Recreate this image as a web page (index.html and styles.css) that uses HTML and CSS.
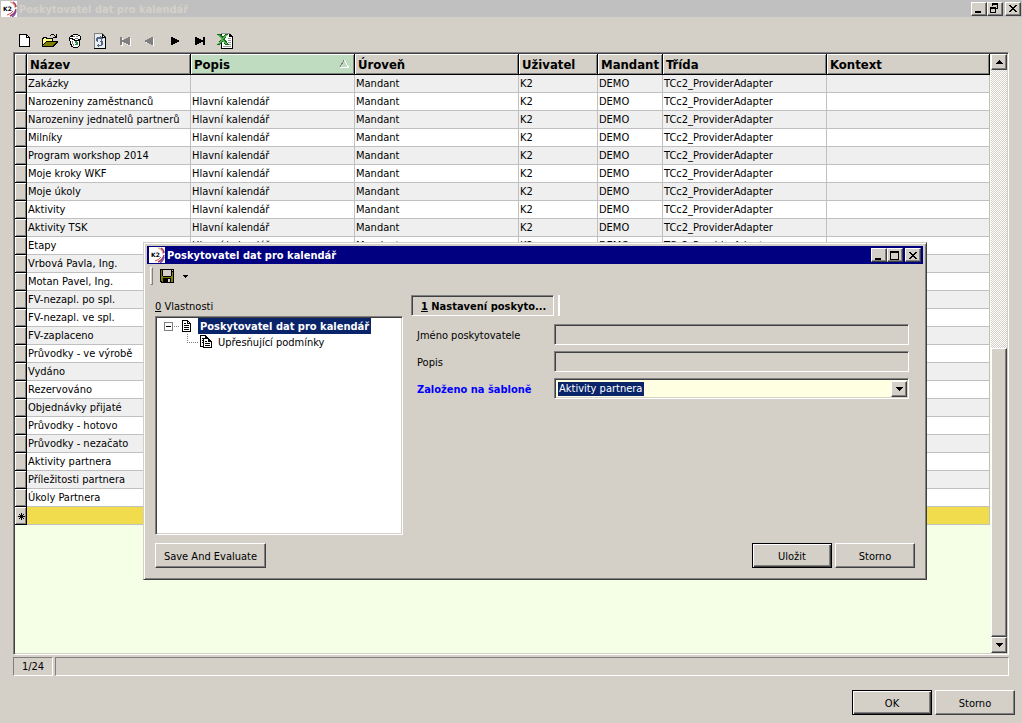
FILE: index.html
```html
<!DOCTYPE html>
<html lang="cs">
<head>
<meta charset="utf-8">
<title>Poskytovatel dat pro kalendář</title>
<link rel="stylesheet" href="styles.css">
</head>
<body>
<svg class="defs" aria-hidden="true">
  <symbol id="logo" viewBox="0 0 16 16">
    <path fill="#fff" d="M0 0h16v16H0z"/>
    <path fill="none" stroke="#e9b08a" stroke-width="1.5" d="M9 1q5 1 5 6"/>
    <path fill="none" stroke="#a03a6a" stroke-width="1.5" d="M12 1q3 2 3 5M15 8q-1 5-6 7"/>
    <path fill="none" stroke="#7a4fa8" stroke-width="1.5" d="M15 10q-1 4-4 6"/>
    <path fill="none" stroke="#d84a3a" d="M12 10q-2 3-6 4"/>
    <text class="logo-text" x="2" y="10">K2</text>
  </symbol>
  <symbol id="min" viewBox="0 0 12 11"><path d="M2 8h6v2H2z"/></symbol>
  <symbol id="max" viewBox="0 0 12 11"><path fill-rule="evenodd" d="M1 1h9v9H1zM2 3v6h7V3z"/></symbol>
  <symbol id="restore" viewBox="0 0 12 11"><path fill-rule="evenodd" d="M3 0h6v6H7V5h1V2H4v1H3zM1 4h6v6H1zM2 6v3h4V6z"/></symbol>
  <symbol id="close" viewBox="0 0 12 11"><path d="M2 2h2v1h1v1h2V3h1V2h2v1H9v1H8v1H7v1h1v1h1v1h1v1H8V8H7V7H5v1H4v1H2V8h1V7h1V6h1V5H4V4H3V3H2z"/></symbol>
  <symbol id="down" viewBox="0 0 7 4"><path d="M0 0h7v1H6v1H5v1H4v1H3V3H2V2H1V1H0z"/></symbol>
  <symbol id="up" viewBox="0 0 7 4"><path d="M0 4h7V3H6V2H5V1H4V0H3v1H2v1H1v1H0z"/></symbol>
</svg>

<div class="app">
  <header class="titlebar titlebar-inactive">
    <svg class="logo"><use href="#logo"/></svg>
    <h1 class="title">Poskytovatel dat pro kalendář</h1>
    <div class="win-controls">
      <button class="win-btn" aria-label="Minimalizovat"><svg><use href="#min"/></svg></button>
      <button class="win-btn" aria-label="Obnovit"><svg><use href="#restore"/></svg></button>
      <button class="win-btn win-close" aria-label="Zavřít"><svg><use href="#close"/></svg></button>
    </div>
  </header>

  <div class="toolbar" role="toolbar">
    <button class="tool" aria-label="Nový"><svg viewBox="0 0 16 16"><path d="M2 1h8v1h1v1h1v1h1v10H2z"/><path fill="#fff" d="M3 2h6v3h3v8H3z"/><path fill="#fff" d="M10 3h1v1h-1z"/></svg></button>
    <button class="tool" aria-label="Otevřít"><svg viewBox="0 0 16 16"><path d="M9 1h3v1h1v1h1V1h1v4h-4V4h2V3h-1V2H9v1H8V2h1zM1 4h4v1h6v3h5v1l-5 5H0V5h1z"/><path fill="#ffff80" d="M1 6h1V5h2v1h6v2H4v1H3v1H2v1H1z"/><path fill="#808000" d="M4 9h10l-4 4H1z"/></svg></button>
    <button class="tool" aria-label="Smazat"><svg viewBox="0 0 16 16"><path d="M6 1h5v1h2v1h1v4h-1v6h-1v1h-1v1H6v-1H4v-2H3V8H2V4h1V3h1V2h2z"/><path fill="#fff" d="M6 2h5v1h2v3h-2v1H8V6H6V5H3V4h3zM3 6h2v1h2v1h5v5h-1v1H6v-1H5v-2H4V8H3z"/><path fill="#808080" d="M6 3h2v1H6zM9 3h2v1H9zM8 5h3v1H8zM5 8h1v3H5zM6 11h1v2H6z"/><path fill="#2c8c3c" d="M8 8h2v1h1v3H8v-1h1v-1H8z"/></svg></button>
    <button class="tool" aria-label="Obnovit data"><svg viewBox="0 0 16 16"><path fill="#808080" d="M2 0h9l3 4v12H2z"/><path fill="#e8eeee" d="M3 1h7v4h3v10H3z"/><path d="M10 1h1v1h1v1h1v1h1v1h-4zM13 5h1v11H2v-1h11z"/><path fill="#fff" d="M11 3h1v1h-1z"/><path fill="#56658c" d="M5 4h3V3h1v1h1v1h1v1h-1v1H9V6H6v3H5V8H4V5h1zM6 12h3V9H8V8h1V7h1v1h1v4h-1v1H7v1H6v-1H5v-1h1v-1h1v1z"/></svg></button>
    <button class="tool" aria-label="První" disabled><svg viewBox="0 0 16 16"><path fill="#fff" d="M4 5h2v8H4zM7 8h1V7h2V6h2V5h2v8h-2v-1h-2v-1H8v-1H7z"/><path fill="#808080" d="M3 4h2v8H3zM5 7h2V6h2V5h2V4h2v8h-2v-1H9v-1H7V9H5z"/></svg></button>
    <button class="tool" aria-label="Předchozí" disabled><svg viewBox="0 0 16 16"><path fill="#fff" d="M4 8h2V7h2V6h2V5h2v8h-1v-1H9v-1H7v-1H4z"/><path fill="#808080" d="M3 7h2V6h2V5h2V4h2v8H9v-1H7v-1H5V9H3z"/></svg></button>
    <button class="tool" aria-label="Další"><svg viewBox="0 0 16 16"><path d="M4 4h2v1h2v1h2v1h2v2h-2v1H8v1H6v1H4z"/></svg></button>
    <button class="tool" aria-label="Poslední"><svg viewBox="0 0 16 16"><path d="M3 4h2v1h2v1h2v1h2V4h2v8h-2V9H9v1H7v1H5v1H3z"/></svg></button>
    <button class="tool" aria-label="Export do Excelu"><svg viewBox="0 0 16 16"><path d="M4 0h9v1h1v1h1v1h1v13H4z"/><path fill="#fff" d="M4 1h8v3h3v11H5V1z"/><path fill="#999" d="M4 0h9v1H4zM11 5h3v1h-3zM11 7h3v1h-3zM11 9h3v1h-3zM11 11h3v1h-3zM6 13h8v1H6z"/><path fill="#136b1c" d="M0 1h4l2 3 2-3h3L8 6l4 6H8L6 8l-3 4H0l4-6z"/><path fill="#54b04c" d="M1 2h2l7 9H8zM8 2h2L3 11H1z"/></svg></button>
  </div>

  <main class="grid sunken">
    <div class="grid-view">
      <table class="table">
        <colgroup><col class="c-mark"><col class="c-wide"><col class="c-wide"><col class="c-wide"><col class="c-user"><col class="c-mandant"><col class="c-wide"><col></colgroup>
        <thead>
          <tr><td class="mark"></td><th>Název</th><th class="sorted"><span class="sort-head">Popis <svg viewBox="0 0 9 8"><path d="M4 0 0 7" stroke="#808080"/><path d="M0 7.500h8.500L4.500 0" stroke="#fff"/></svg></span></th><th>Úroveň</th><th>Uživatel</th><th>Mandant</th><th>Třída</th><th>Kontext</th></tr>
        </thead>
        <tbody>
          <tr><td class="mark"></td><td>Zakázky</td><td></td><td>Mandant</td><td>K2</td><td>DEMO</td><td>TCc2_ProviderAdapter</td><td></td></tr>
          <tr><td class="mark"></td><td>Narozeniny zaměstnanců</td><td>Hlavní kalendář</td><td>Mandant</td><td>K2</td><td>DEMO</td><td>TCc2_ProviderAdapter</td><td></td></tr>
          <tr><td class="mark"></td><td>Narozeniny jednatelů partnerů</td><td>Hlavní kalendář</td><td>Mandant</td><td>K2</td><td>DEMO</td><td>TCc2_ProviderAdapter</td><td></td></tr>
          <tr><td class="mark"></td><td>Milníky</td><td>Hlavní kalendář</td><td>Mandant</td><td>K2</td><td>DEMO</td><td>TCc2_ProviderAdapter</td><td></td></tr>
          <tr><td class="mark"></td><td>Program workshop 2014</td><td>Hlavní kalendář</td><td>Mandant</td><td>K2</td><td>DEMO</td><td>TCc2_ProviderAdapter</td><td></td></tr>
          <tr><td class="mark"></td><td>Moje kroky WKF</td><td>Hlavní kalendář</td><td>Mandant</td><td>K2</td><td>DEMO</td><td>TCc2_ProviderAdapter</td><td></td></tr>
          <tr><td class="mark"></td><td>Moje úkoly</td><td>Hlavní kalendář</td><td>Mandant</td><td>K2</td><td>DEMO</td><td>TCc2_ProviderAdapter</td><td></td></tr>
          <tr><td class="mark"></td><td>Aktivity</td><td>Hlavní kalendář</td><td>Mandant</td><td>K2</td><td>DEMO</td><td>TCc2_ProviderAdapter</td><td></td></tr>
          <tr><td class="mark"></td><td>Aktivity TSK</td><td>Hlavní kalendář</td><td>Mandant</td><td>K2</td><td>DEMO</td><td>TCc2_ProviderAdapter</td><td></td></tr>
          <tr><td class="mark"></td><td>Etapy</td><td>Hlavní kalendář</td><td>Mandant</td><td>K2</td><td>DEMO</td><td>TCc2_ProviderAdapter</td><td></td></tr>
          <tr><td class="mark"></td><td>Vrbová Pavla, Ing.</td><td></td><td></td><td></td><td></td><td></td><td></td></tr>
          <tr><td class="mark"></td><td>Motan Pavel, Ing.</td><td></td><td></td><td></td><td></td><td></td><td></td></tr>
          <tr><td class="mark"></td><td>FV-nezapl. po spl.</td><td></td><td></td><td></td><td></td><td></td><td></td></tr>
          <tr><td class="mark"></td><td>FV-nezapl. ve spl.</td><td></td><td></td><td></td><td></td><td></td><td></td></tr>
          <tr><td class="mark"></td><td>FV-zaplaceno</td><td></td><td></td><td></td><td></td><td></td><td></td></tr>
          <tr><td class="mark"></td><td>Průvodky - ve výrobě</td><td></td><td></td><td></td><td></td><td></td><td></td></tr>
          <tr><td class="mark"></td><td>Vydáno</td><td></td><td></td><td></td><td></td><td></td><td></td></tr>
          <tr><td class="mark"></td><td>Rezervováno</td><td></td><td></td><td></td><td></td><td></td><td></td></tr>
          <tr><td class="mark"></td><td>Objednávky přijaté</td><td></td><td></td><td></td><td></td><td></td><td></td></tr>
          <tr><td class="mark"></td><td>Průvodky - hotovo</td><td></td><td></td><td></td><td></td><td></td><td></td></tr>
          <tr><td class="mark"></td><td>Průvodky - nezačato</td><td></td><td></td><td></td><td></td><td></td><td></td></tr>
          <tr><td class="mark"></td><td>Aktivity partnera</td><td></td><td></td><td></td><td></td><td></td><td></td></tr>
          <tr><td class="mark"></td><td>Příležitosti partnera</td><td></td><td></td><td></td><td></td><td></td><td></td></tr>
          <tr><td class="mark"></td><td>Úkoly Partnera</td><td></td><td></td><td></td><td></td><td></td><td></td></tr>
          <tr class="new-row"><td class="mark"><svg viewBox="0 0 7 7"><path d="M3 0h1v2h1V1h1v1H5v1h2v1H5v1h1v1H5V5H4v2H3V5H2v1H1V5h1V4H0V3h2V2H1V1h1v1h1z"/></svg></td><td colspan="7"></td></tr>
        </tbody>
      </table>
    </div>
    <div class="scrollbar">
      <button class="scroll-btn" aria-label="Nahoru"><svg><use href="#up"/></svg></button>
      <div class="track"><div class="thumb"></div></div>
      <button class="scroll-btn" aria-label="Dolů"><svg><use href="#down"/></svg></button>
    </div>
  </main>

  <div class="status">
    <div class="panel panel-count">1/24</div>
    <div class="panel panel-text"></div>
  </div>

  <footer class="actions">
    <button class="btn btn-default">OK</button>
    <button class="btn">Storno</button>
  </footer>
</div>

<section class="dialog" role="dialog" aria-labelledby="dialog-title">
  <header class="titlebar">
    <svg class="logo"><use href="#logo"/></svg>
    <h2 class="title" id="dialog-title">Poskytovatel dat pro kalendář</h2>
    <div class="win-controls">
      <button class="win-btn" aria-label="Minimalizovat"><svg><use href="#min"/></svg></button>
      <button class="win-btn" aria-label="Maximalizovat"><svg><use href="#max"/></svg></button>
      <button class="win-btn win-close" aria-label="Zavřít"><svg><use href="#close"/></svg></button>
    </div>
  </header>
  <div class="dialog-tools" role="toolbar">
    <span class="grip"></span>
    <button class="tool" aria-label="Uložit"><svg viewBox="0 0 16 16"><path d="M1 1h14v14H2v-1H1z"/><path fill="#808000" d="M2 2h1v6h1v1h8V8h1V4h1v10h-2v-4H4v4H3v-1H2z"/><path fill="#d4d0c8" d="M4 2h8v6H4zM13 2h1v1h-1zM9 11h2v3H9z"/></svg></button>
    <button class="drop" aria-label="Další možnosti"><svg viewBox="0 0 5 3"><path d="M0 0h5v1H4v1H3v1H2V2H1V1H0z"/></svg></button>
  </div>
  <div class="dialog-body">
    <div class="props">
      <div class="props-label"><u>0</u> Vlastnosti</div>
      <div class="tree sunken" role="tree">
        <div class="node" role="treeitem">
          <svg class="lines" viewBox="0 0 18 16"><path fill="#808080" fill-rule="evenodd" d="M0 4h9v9H0zM1 5v7h7V5zM10 8h1v1h-1zM12 8h1v1h-1zM14 8h1v1h-1z"/><path d="M2 8h5v1H2z"/></svg>
          <svg class="doc" viewBox="0 0 12 16"><path d="M0 2h6v1h1v1h1v1h1v9H0z"/><path fill="#fff" d="M1 3h4v3h3v7H1z"/><path fill="#fff" d="M6 4h1v1H6z"/><path d="M2 5h2v1H2zM2 7h5v1H2zM2 9h5v1H2zM2 11h5v1H2z"/></svg>
          <span class="node-text selected">Poskytovatel dat pro kalendář</span>
        </div>
        <div class="node child" role="treeitem">
          <svg class="branch" viewBox="0 0 12 16"><path fill="none" stroke="#808080" stroke-dasharray="1 1" d="M.5 0v8.500H12"/></svg>
          <svg class="doc" viewBox="0 0 12 16"><path d="M0 1h6v1h1v1h1v1h1v9H0z"/><path fill="#fff" d="M1 2h4v3h3v7H1z"/><path d="M2 4h2v1H2zM2 6h2v1H2zM2 8h2v1H2zM3 4h6v1h1v1h1v1h1v7H3z"/><path fill="#fff" d="M4 5h4v3h3v5H4z"/><path d="M5 7h2v1H5zM5 9h5v1H5zM5 11h5v1H5z"/></svg>
          <span class="node-text">Upřesňující podmínky</span>
        </div>
      </div>
    </div>
    <form class="form">
      <div class="tabs"><button type="button" class="tab"><u>1</u> Nastavení poskyto...</button><span class="tab-end"></span></div>
      <div class="fields">
        <label for="name">Jméno poskytovatele</label>
        <input class="field sunken" id="name" type="text" readonly>
        <label for="desc">Popis</label>
        <input class="field sunken" id="desc" type="text" readonly>
        <label class="required" for="template">Založeno na šabloně</label>
        <div class="field combo sunken">
          <select id="template"><option>Aktivity partnera</option></select>
          <span class="scroll-btn"><svg><use href="#down"/></svg></span>
        </div>
      </div>
    </form>
  </div>
  <footer class="dialog-actions">
    <button class="btn btn-wide">Save And Evaluate</button>
    <button class="btn btn-default">Uložit</button>
    <button class="btn">Storno</button>
  </footer>
</section>
</body>
</html>
```
FILE: styles.css
```css
* {
  box-sizing: border-box;
}

:root {
  --face: #d4d0c8;
  --shadow: #808080;
  --dark: #404040;
}

body {
  margin: 0;
  background: var(--face);
  color: #000;
  font: 11px/14px "DejaVu Sans Condensed", "DejaVu Sans", sans-serif;
}

button,
input,
select {
  margin: 0;
  padding: 0;
  border: 0;
  border-radius: 0;
  background: none;
  color: inherit;
  font: inherit;
}

svg {
  display: block;
  flex: none;
  shape-rendering: crispEdges;
}

.defs {
  position: absolute;
  width: 0;
  height: 0;
}

.app {
  display: flex;
  flex-direction: column;
  min-height: 100vh;
}

.sunken {
  border: 1px solid;
  border-color: var(--shadow) #fff #fff var(--shadow);
  box-shadow: inset 1px 1px var(--dark), inset -1px -1px var(--face);
}

/* Title bars */
.titlebar {
  display: flex;
  align-items: center;
  height: 18px;
  padding: 0 2px;
  background: #000080;
  color: #fff;
}

.titlebar-inactive {
  height: 17px;
  padding: 0 1px;
  background: #c0c0c0;
  color: var(--face);
}

.logo {
  width: 16px;
  height: 16px;
  shape-rendering: auto;
}

.logo-text {
  font: bold 6px "DejaVu Sans", sans-serif;
}

.title {
  flex: 1;
  margin: 0;
  padding: 2px 0 0 2px;
  font-size: 11px;
  line-height: 14px;
}

.win-controls {
  display: flex;
}

.win-btn,
.scroll-btn,
.thumb {
  border: 1px solid;
  border-color: #fff var(--dark) var(--dark) #fff;
  background: var(--face);
  box-shadow: inset -1px -1px var(--shadow);
}

.win-btn {
  width: 16px;
  height: 14px;
  color: #000;
}

.win-btn svg {
  width: 12px;
  height: 11px;
  margin-left: 1px;
}

.win-close {
  margin-left: 2px;
}

/* Main toolbar */
.toolbar {
  display: flex;
  gap: 9px;
  padding: 16px 17px 3px;
}

.tool,
.tool svg {
  width: 16px;
  height: 16px;
}

/* Data grid */
.grid {
  display: flex;
  flex: 1;
  margin: 0 13px;
  padding: 1px;
  background: #f5ffe5;
}

.grid-view {
  flex: 1;
  min-width: 0;
}

.table {
  width: 100%;
  table-layout: fixed;
  border-collapse: separate;
  border-spacing: 0;
}

.c-mark { width: 12px; }
.c-wide { width: 164px; }
.c-user { width: 79px; }
.c-mandant { width: 65px; }

.table th {
  height: 21px;
  padding: 2px 0 0 3px;
  border: solid #000;
  border-width: 0 1px 1px 0;
  background: var(--face);
  box-shadow: inset 1px 1px #fff, inset -1px -1px var(--shadow);
  font-size: 13px;
  line-height: 18px;
  text-align: left;
  white-space: nowrap;
}

.table .sorted {
  background: #c0dcc0;
}

.sort-head {
  display: flex;
  align-items: center;
  justify-content: space-between;
}

.sort-head svg {
  width: 9px;
  height: 8px;
  margin: 0 5px 2px 0;
  fill: none;
}

.table td {
  height: 18px;
  padding: 1px 1px 0;
  border: solid #c0c0c0;
  border-width: 0 1px 1px 0;
  background: #fff;
  white-space: nowrap;
}

.table tr:nth-child(odd) td {
  background: #efefef;
}

.table tr .mark,
.table tr:nth-child(odd) .mark {
  border-color: #000;
  background: var(--face);
  box-shadow: inset 1px 1px #fff, inset -1px -1px var(--shadow);
}

.mark svg {
  width: 7px;
  height: 7px;
  margin: 0 2px;
}

.table .new-row:nth-child(odd) td:last-child {
  background: #f0dc4c;
}

.scrollbar {
  display: flex;
  flex-direction: column;
  width: 16px;
  margin-left: 1px;
}

.scroll-btn {
  display: flex;
  align-items: center;
  justify-content: center;
  width: 16px;
  height: 16px;
}

.scroll-btn svg {
  width: 7px;
  height: 4px;
}

.track {
  display: flex;
  flex: 1;
  flex-direction: column;
  justify-content: flex-end;
  background: repeating-conic-gradient(#fff 0 25%, var(--face) 0 50%) 0 0 / 2px 2px;
}

.thumb {
  height: 51%;
}

/* Status bar */
.status {
  display: flex;
  gap: 2px;
  margin: 2px 13px 0;
}

.panel {
  height: 19px;
  border: 1px solid;
  border-color: var(--shadow) #fff #fff var(--shadow);
  line-height: 18px;
}

.panel-count {
  width: 40px;
  text-align: center;
}

.panel-text {
  flex: 1;
}

/* Push buttons */
.btn {
  width: 80px;
  height: 25px;
  padding-top: 2px;
  border: 1px solid;
  border-color: #fff var(--dark) var(--dark) #fff;
  background: var(--face);
  box-shadow: inset -1px -1px var(--shadow);
}

.btn-default {
  border-color: #000;
  box-shadow: inset 1px 1px #fff, inset -1px -1px var(--dark), inset -2px -2px var(--shadow);
}

.btn-wide {
  width: 111px;
  margin-right: auto;
}

.actions {
  display: flex;
  justify-content: flex-end;
  gap: 3px;
  padding: 14px 7px 8px;
}

/* Dialog window */
.dialog {
  position: absolute;
  top: 242px;
  left: 143px;
  width: 784px;
  padding: 2px;
  border: 1px solid;
  border-color: var(--face) var(--dark) var(--dark) var(--face);
  background: var(--face);
  box-shadow: inset 1px 1px #fff, inset -1px -1px var(--shadow);
}

.dialog > .titlebar {
  margin: 1px 1px 0;
}

.dialog-tools {
  display: flex;
  align-items: center;
  padding: 3px 4px 0;
}

.grip {
  width: 3px;
  height: 18px;
  margin-right: 6px;
  border: 1px solid;
  border-color: #fff var(--shadow) var(--shadow) #fff;
}

.drop {
  padding: 4px 8px;
}

.drop svg {
  width: 5px;
  height: 3px;
}

.dialog-body {
  display: flex;
  gap: 8px;
  padding: 10px 15px 0 9px;
}

.props {
  width: 248px;
}

.props-label {
  margin: 5px 0 2px;
}

.tree {
  height: 219px;
  padding: 1px 8px;
  background: #fff;
}

.node {
  display: flex;
  height: 16px;
}

.child {
  padding-left: 23px;
}

.lines {
  width: 18px;
  height: 16px;
}

.branch,
.doc {
  width: 12px;
  height: 16px;
}

.branch {
  margin-right: 1px;
}

.node-text {
  margin-left: 4px;
  padding: 2px 2px 0;
}

.selected {
  background: #0a246a;
  color: #fff;
  font-weight: bold;
}

.form {
  flex: 1;
}

.tabs {
  display: flex;
  gap: 4px;
}

.tab {
  height: 21px;
  padding: 2px 7px 0 9px;
  border: 1px solid;
  border-color: var(--shadow) #fff #fff var(--shadow);
  box-shadow: inset 1px 1px var(--dark);
  font-weight: bold;
}

.tab-end {
  width: 2px;
  border: solid;
  border-width: 0 1px;
  border-color: var(--shadow) #fff;
}

.fields {
  display: grid;
  grid-template-columns: 137px 1fr;
  row-gap: 6px;
  align-items: center;
  margin-top: 8px;
  padding-left: 6px;
}

.fields label {
  padding-top: 2px;
}

.required {
  color: #0000ff;
  font-weight: bold;
}

.field {
  width: 100%;
  height: 21px;
  padding: 0 4px;
}

.combo {
  display: flex;
  align-items: center;
  justify-content: space-between;
  padding: 1px 1px 1px 3px;
  background: #ffffe1;
}

.combo select {
  height: 14px;
  padding: 0 1px;
  appearance: none;
  background: #0a246a;
  color: #fff;
}

.dialog-actions {
  display: flex;
  gap: 3px;
  padding: 8px 9px 9px;
}
```
